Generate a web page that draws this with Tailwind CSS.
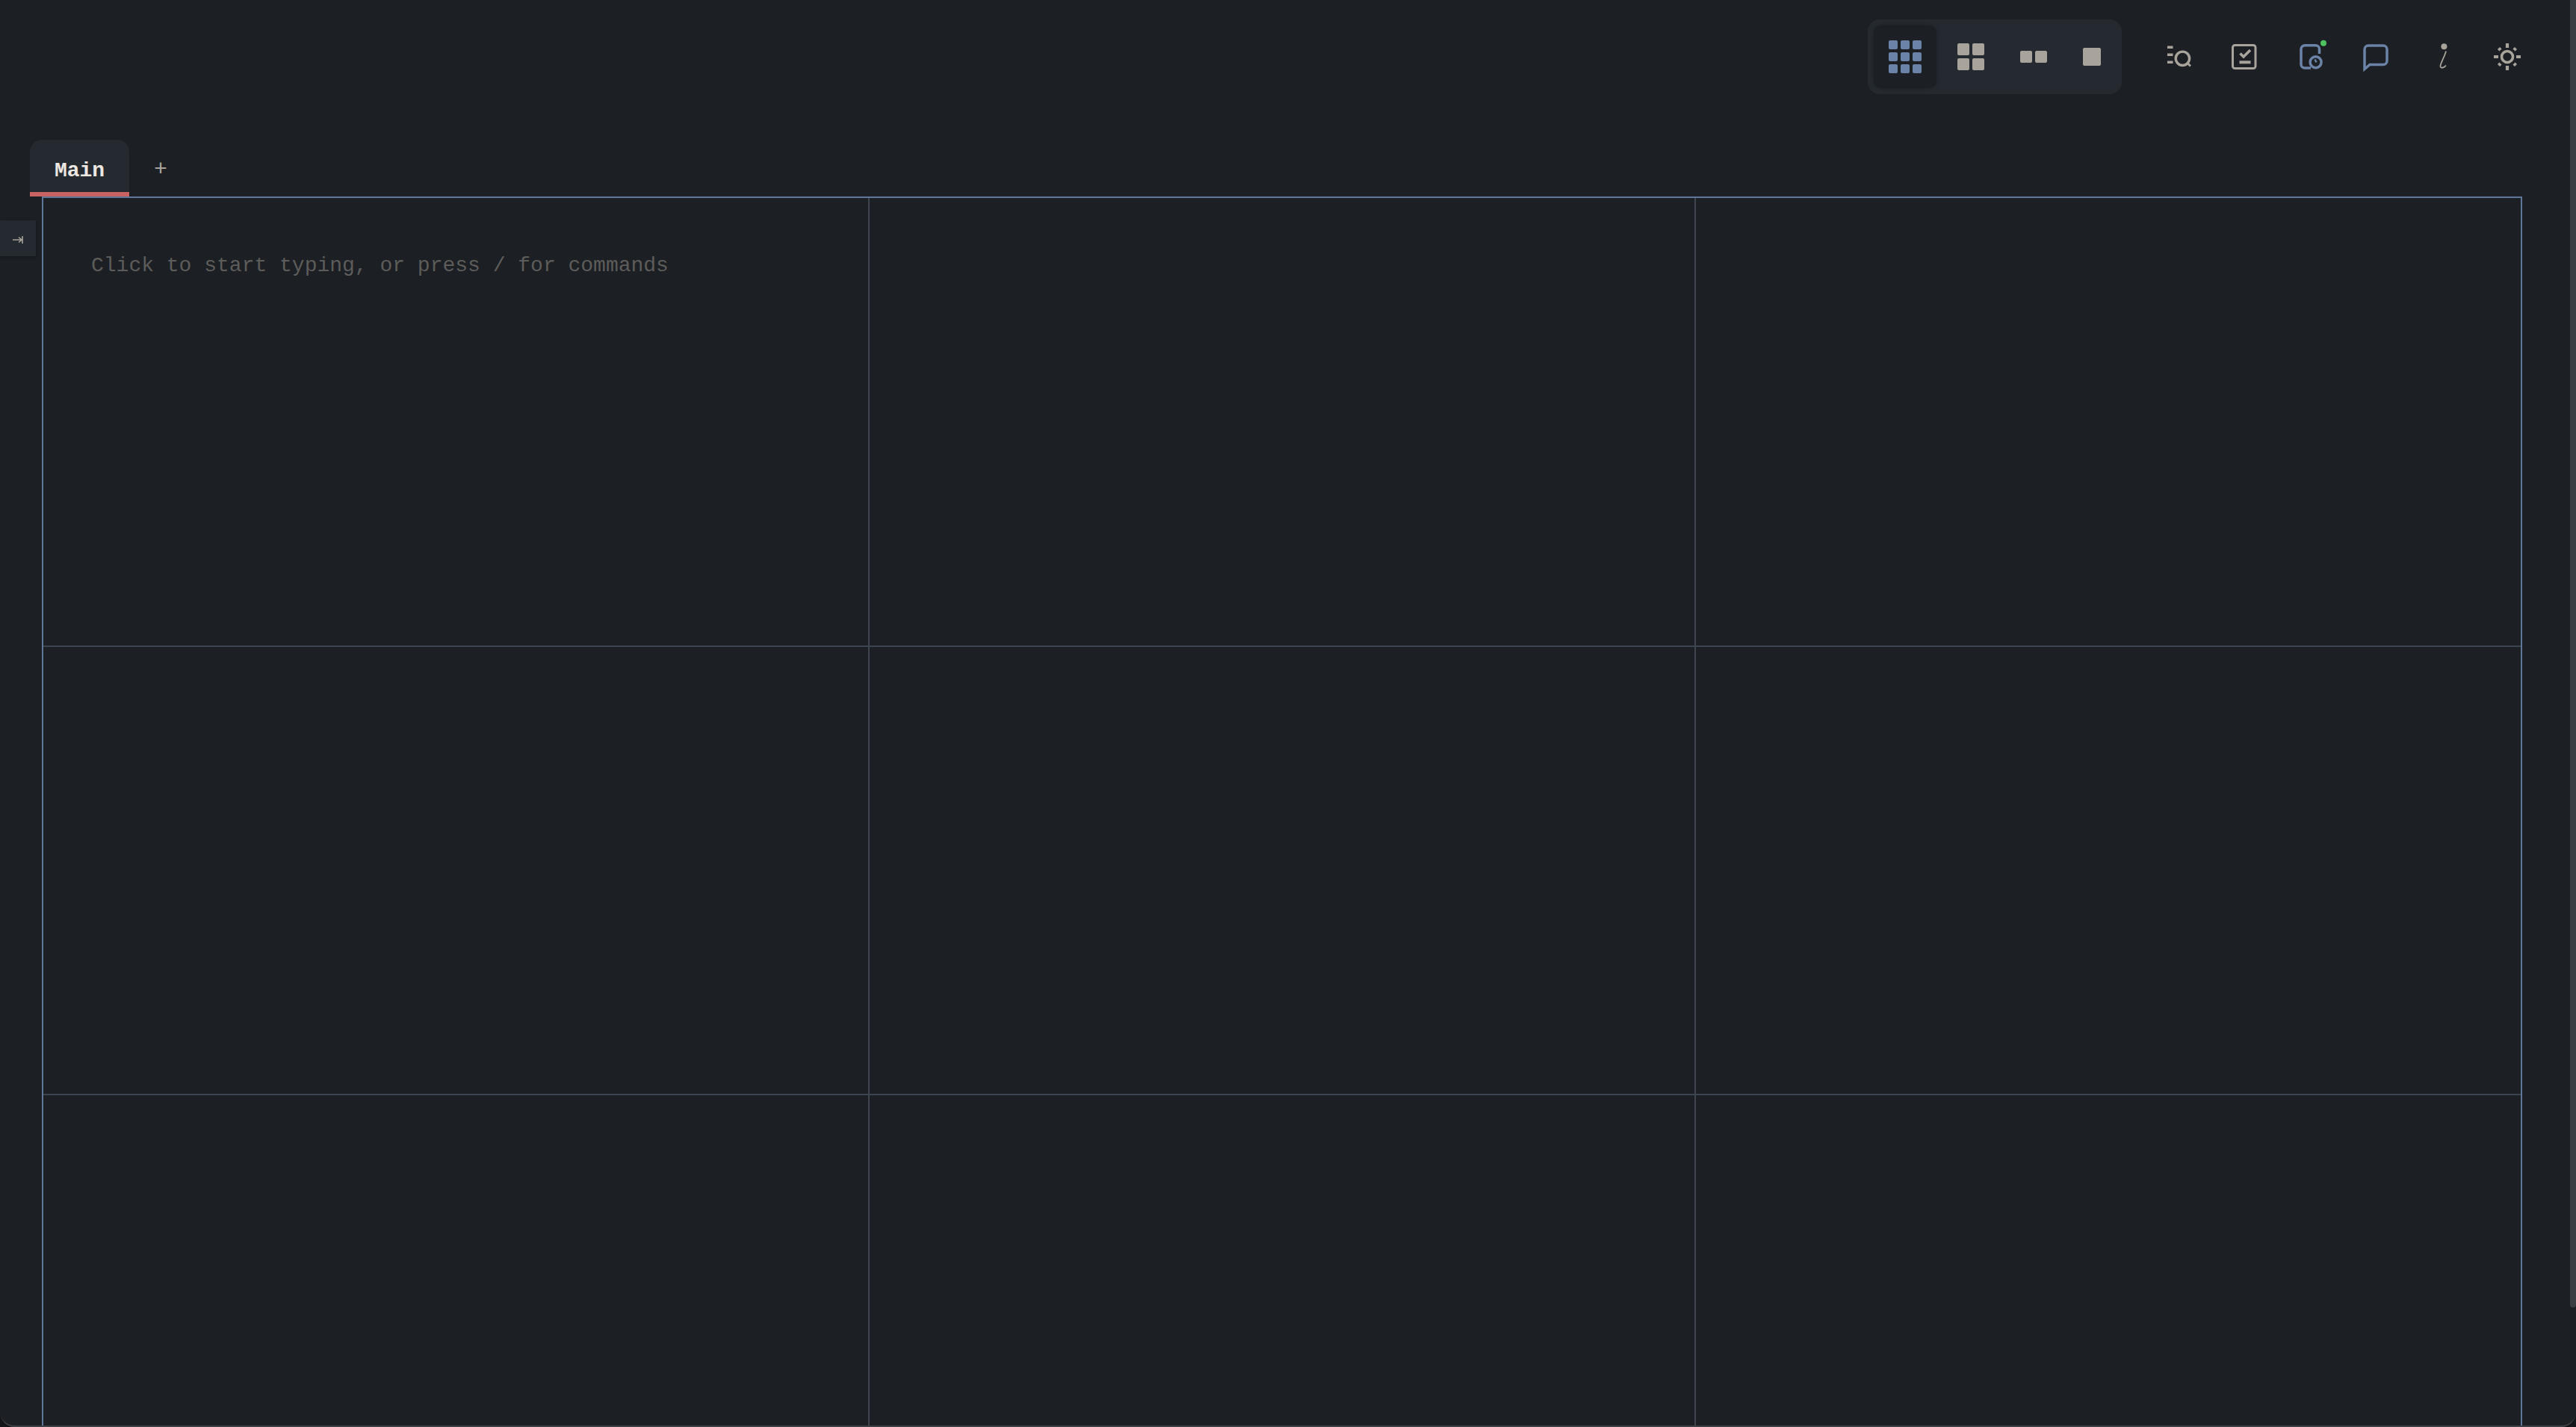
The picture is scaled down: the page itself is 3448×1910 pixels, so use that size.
<!DOCTYPE html>
<html>
<head>
<meta charset="utf-8">
<script src="https://cdn.jsdelivr.net/npm/@tailwindcss/browser@4"></script>
</head>
<body class="bg-[#131518] overflow-hidden">
<div class="relative w-[3448px] h-[1910px] overflow-hidden bg-[#1c1f24] rounded-b-[20px] border-b-2 border-[#3f4347] font-['Liberation_Mono',monospace]">
  <!-- top toolbar -->
  <header class="h-[187px] flex flex-col">
    <div class="h-[100px] pt-[26px] pl-[2500px] flex items-start">
      <div class="w-[340px] h-[100px] rounded-[16px] bg-[#252a31] flex items-center pl-[8px]">
        <div class="w-[84px] h-[84px] rounded-[10px] bg-[#1c1f24] shadow-[0_0_6px_rgba(0,0,0,0.25)] flex items-center justify-center">
          <svg width="44" height="44" viewBox="0 0 44 44" fill="#6b83a6"><rect width="12" height="12" rx="2"/><rect x="16" width="12" height="12" rx="2"/><rect x="32" width="12" height="12" rx="2"/><rect y="16" width="12" height="12" rx="2"/><rect x="16" y="16" width="12" height="12" rx="2"/><rect x="32" y="16" width="12" height="12" rx="2"/><rect y="32" width="12" height="12" rx="2"/><rect x="16" y="32" width="12" height="12" rx="2"/><rect x="32" y="32" width="12" height="12" rx="2"/></svg>
        </div>
        <svg class="ml-[28px]" width="36" height="36" viewBox="0 0 36 36" fill="#a8a39b"><rect width="16" height="16" rx="2"/><rect x="20" width="16" height="16" rx="2"/><rect y="20" width="16" height="16" rx="2"/><rect x="20" y="20" width="16" height="16" rx="2"/></svg>
        <svg class="ml-[48px]" width="36" height="16" viewBox="0 0 36 16" fill="#a8a39b"><rect width="16" height="16" rx="2"/><rect x="20" width="16" height="16" rx="2"/></svg>
        <svg class="ml-[48px]" width="24" height="24" viewBox="0 0 24 24" fill="#a8a39b"><rect width="24" height="24" rx="2"/></svg>
      </div>
      <div class="flex items-center h-[100px] relative w-[560px]">
        <!-- search list -->
        <svg class="absolute left-[61px] top-[31px]" width="36" height="36" viewBox="0 0 36 36" fill="none"><path d="M0 6.300h7.500M0 16.300h7.500M0 26.300h7.500" stroke="#a8a39b" stroke-width="3.500"/><circle cx="20.400" cy="21.300" r="9.200" stroke="#a8a39b" stroke-width="3.400"/><path d="M27 27.500l4 4" stroke="#a8a39b" stroke-width="3"/></svg>
        <!-- checklist -->
        <svg class="absolute left-[147px] top-[33px]" width="34" height="34" viewBox="0 0 34 34" fill="none"><rect x="1.500" y="1.500" width="30.500" height="31" rx="3" stroke="#a8a39b" stroke-width="3"/><path d="M11.500 12.500l4.500 4.500 9-9" stroke="#a8a39b" stroke-width="3.600"/><path d="M10.500 24.300h15" stroke="#a8a39b" stroke-width="4"/></svg>
        <!-- history -->
        <svg class="absolute left-[238px] top-[27px]" width="40" height="44" viewBox="0 0 40 44" fill="none"><path d="M26.500 19v-6.250a5 5 0 0 0-5-5H7a5 5 0 0 0-5 5V33a5 5 0 0 0 5 5h8" stroke="#6b83a6" stroke-width="3.500"/><circle cx="21.600" cy="30.300" r="7.500" stroke="#6b83a6" stroke-width="3.500"/><path d="M20.500 26.500l2 4" stroke="#6b83a6" stroke-width="2.500"/><circle cx="32" cy="4.700" r="4" fill="#4fc15f"/></svg>
        <!-- comment -->
        <svg class="absolute left-[323px] top-[33px]" width="34" height="38" viewBox="0 0 34 38" fill="none"><path d="M2 33.500V7a5 5 0 0 1 5-5h20a5 5 0 0 1 5 5v15.500a5 5 0 0 1-5 5H9z" stroke="#6b83a6" stroke-width="3.500"/></svg>
        <!-- info -->
        <svg class="absolute left-[422px] top-[32px]" width="18" height="36" viewBox="0 0 18 36" fill="none"><circle cx="9.400" cy="4.300" r="4" fill="#a8a39b"/><path d="M12 10.500C10 18 5.500 25 4.500 30c-.6 3.500 4 4 7.500-.5" stroke="#a8a39b" stroke-width="1.800"/></svg>
        <!-- sun -->
        <svg class="absolute left-[498px] top-[32px]" width="36" height="36" viewBox="0 0 36 36" fill="none"><circle cx="18" cy="18" r="7.500" stroke="#a8a39b" stroke-width="3.600"/><path d="M18 0v6M18 30v6M0 18h6M30 18h6" stroke="#a8a39b" stroke-width="4.200"/><path d="M6.500 6.500l2.500 2.500M27 27l2.500 2.500M6.500 29.500L9 27M27 9l2.500-2.500" stroke="#a8a39b" stroke-width="4.400"/></svg>
      </div>
    </div>
  </header>
  <!-- tabs -->
  <div class="absolute left-[40px] top-[187px] flex items-start">
    <div class="w-[133px] h-[76px] rounded-t-[16px] bg-[#252a31] border-b-[6px] border-[#c96363] flex items-center justify-center pt-[14px] text-[28px] leading-none font-bold text-[#ece8e1]">Main</div>
    <div class="ml-[33px] mt-[25px] text-[30px] leading-[30px] text-[#a8a39b]">+</div>
  </div>
  <!-- sidebar toggle -->
  <div class="absolute left-0 top-[295px] w-[48px] h-[48px] bg-[#252a31] shadow-[0_1px_4px_rgba(0,0,0,0.3)] flex items-center justify-center pt-[4px]">
    <svg width="14" height="10" viewBox="0 0 14 10" fill="none"><path d="M0 5h12M8 1.500L12 5 8 8.500M13 0v10" stroke="#a8a39b" stroke-width="1.600"/></svg>
  </div>
  <!-- grid -->
  <main class="absolute left-[56px] top-[263px] w-[3320px] h-[1700px] border-2 border-[#5f7798] grid grid-cols-[1106px_1106px_1fr] grid-rows-[600.5px_600.5px_600px]">
    <div class="border-r-2 border-b-2 border-[#3c4550] pl-[64px] pt-[74px] text-[28px] leading-[34px] text-[#5c5c5a]">Click to start typing, or press / for commands</div>
    <div class="border-r-2 border-b-2 border-[#3c4550]"></div>
    <div class="border-b-2 border-[#3c4550]"></div>
    <div class="border-r-2 border-b-2 border-[#3c4550]"></div>
    <div class="border-r-2 border-b-2 border-[#3c4550]"></div>
    <div class="border-b-2 border-[#3c4550]"></div>
    <div class="border-r-2 border-[#3c4550]"></div>
    <div class="border-r-2 border-[#3c4550]"></div>
    <div></div>
  </main>
  <!-- scrollbar -->
  <div class="absolute right-0 top-0 w-[8px] h-[1750px] bg-[#3b3f43] rounded-b-[4px]"></div>
</div>
</body>
</html>
